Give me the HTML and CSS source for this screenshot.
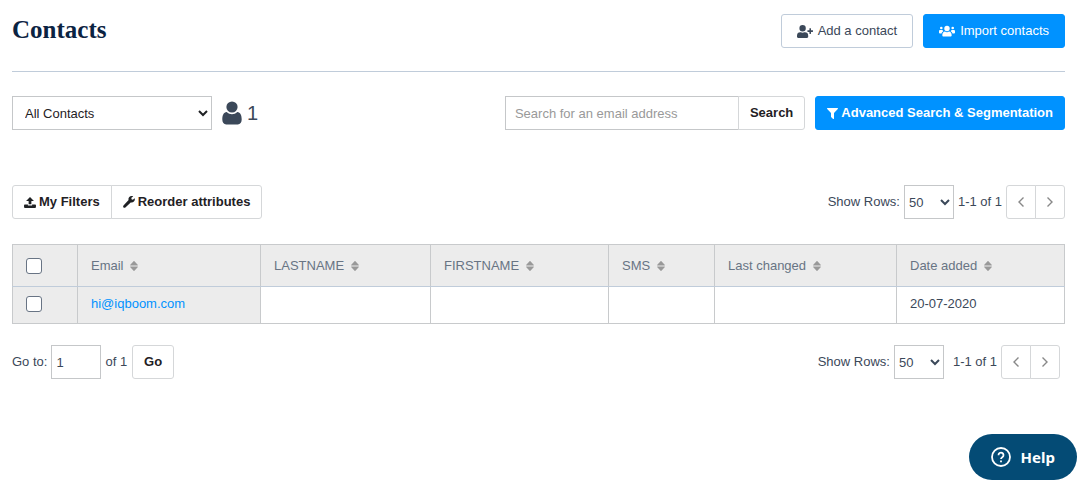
FILE: index.html
```html
<!DOCTYPE html>
<html lang="en">
<head>
<meta charset="utf-8">
<meta name="viewport" content="width=device-width, initial-scale=1">
<title>Contacts</title>
<link rel="stylesheet" href="styles.css">
</head>
<body>
<svg class="sprite" aria-hidden="true">
  <symbol id="sort" viewBox="0 0 8 12"><path d="M3.600 1.200 0.300 4.700C0 5.100.2 5.400.6 5.400h6.800c.4 0 .6-.3.300-.7L4.400 1.200c-.2-.3-.6-.3-.8 0zM3.600 10.800.3 7.300C0 6.900.2 6.600.6 6.600h6.800c.4 0 .6.3.300.7L4.400 10.800c-.2.300-.6.300-.8 0z"/></symbol>
  <symbol id="left" viewBox="0 0 8 12"><path d="M6.500 1.500 2 6l4.500 4.500"/></symbol>
  <symbol id="right" viewBox="0 0 8 12"><path d="M1.500 1.500 6 6l-4.500 4.500"/></symbol>
</svg>
<main class="page">
  <header class="header">
    <h1 class="title">Contacts</h1>
    <div class="header-actions">
      <button class="btn btn-outline" type="button">
        <svg class="icon-add" viewBox="0 0 640 512"><path d="M624 208h-64v-64c0-9-7-16-16-16h-32c-9 0-16 7-16 16v64h-64c-9 0-16 7-16 16v32c0 9 7 16 16 16h64v64c0 9 7 16 16 16h32c9 0 16-7 16-16v-64h64c9 0 16-7 16-16v-32c0-9-7-16-16-16zM224 256a128 128 0 1 0 0-256 128 128 0 0 0 0 256zm90 32h-17a174 174 0 0 1-146 0h-17A134 134 0 0 0 0 422v42c0 27 21 48 48 48h352c27 0 48-21 48-48v-42a134 134 0 0 0-134-134z"/></svg>
        Add a contact
      </button>
      <button class="btn btn-primary btn-import" type="button">
        <svg class="icon-users" viewBox="0 0 16 12"><circle cx="8" cy="3.500" r="2.700"/><path d="M4.600 11.500c-.8 0-1.300-.5-1.300-1.300 0-2.200 1-3.600 2.700-3.800 1.200 1 2.800 1 4 0 1.700.2 2.700 1.600 2.700 3.800 0 .8-.5 1.300-1.300 1.300z"/><circle cx="2.300" cy="3" r="1.300"/><circle cx="13.700" cy="3" r="1.300"/><path d="M1.200 5h2.300c.3.700.4 1 .8 1.400C3.300 6.800 2.700 7.600 2.500 8.500H1C.4 8.500 0 8.200 0 7.700V6.200C0 5.500.5 5 1.200 5zM14.800 5h-2.300c-.3.700-.4 1-.8 1.400 1 .4 1.600 1.200 1.800 2.100H15c.6 0 1-.3 1-.8V6.200c0-.7-.5-1.200-1.200-1.200z"/></svg>
        Import contacts
      </button>
    </div>
  </header>

  <section class="bar search-bar">
    <div class="list-picker">
      <select class="field select-list" aria-label="Contact list"><option>All Contacts</option></select>
      <svg class="icon-person" viewBox="0 0 20 24"><circle cx="10" cy="6" r="5.600"/><path d="M4.700 11c3.200 2.900 7.400 2.900 10.600 0 3 .2 4.400 3.300 4.400 7.600 0 2.900-1.500 4.800-3.900 4.800H4.200C1.800 23.400.3 21.500.3 18.600.3 14.300 1.700 11.200 4.700 11z"/></svg>
      <span class="count">1</span>
    </div>
    <form class="search-form">
      <div class="group">
        <input class="field search-input" type="text" placeholder="Search for an email address" aria-label="Search for an email address">
        <button class="btn btn-plain" type="button">Search</button>
      </div>
      <button class="btn btn-primary btn-advanced" type="button">
        <svg class="icon-filter" viewBox="0 0 11 11"><path d="M.6 0h9.800c.6 0 .8.600.4 1L7 5v5.500c0 .5-.5.700-.9.400L4.300 9.300C4.100 9.100 4 9 4 8.800V5L.2 1C-.2.600 0 0 .6 0z"/></svg>
        Advanced Search &amp; Segmentation
      </button>
    </form>
  </section>

  <section class="bar table-bar">
    <div class="group">
      <button class="btn btn-plain" type="button">
        <svg class="icon-upload" viewBox="0 0 13 12"><path d="M6.500 0 10.800 4.300H8V8H5V4.300H2.200zM.8 8.200h3.400v1.200h4.600V8.200h3.400c.5 0 .8.3.8.8v2c0 .6-.4 1-1 1H1c-.6 0-1-.4-1-1V9c0-.5.3-.8.8-.8z"/></svg>
        My Filters
      </button>
      <button class="btn btn-plain" type="button">
        <svg class="icon-wrench" viewBox="0 0 12 12"><path d="M11.700 2.300 9.800 3.700 8.500 3.200 8.400 1.800 10.200.5C8.900-.2 7.300 0 6.300 1 5.500 1.900 5.200 3 5.600 4.100L.5 9.500c-.5.600-.5 1.400 0 1.900.5.500 1.400.5 1.900 0l5.300-5c1.100.4 2.300.1 3.200-.8.900-.9 1.200-2.100.8-3.300z"/></svg>
        Reorder attributes
      </button>
    </div>
    <div class="pager">
      <label for="rows-top">Show Rows:</label>
      <select class="field select-rows" id="rows-top"><option>50</option></select>
      <span>1-1 of 1</span>
      <div class="group">
        <button class="btn btn-page" type="button" aria-label="Previous page"><svg class="chevron"><use href="#left"/></svg></button>
        <button class="btn btn-page" type="button" aria-label="Next page"><svg class="chevron"><use href="#right"/></svg></button>
      </div>
    </div>
  </section>

  <table class="contacts">
    <colgroup><col class="c-check"><col class="c-email"><col class="c-last"><col class="c-first"><col class="c-sms"><col class="c-changed"><col class="c-added"></colgroup>
    <thead>
      <tr>
        <th><input class="check" type="checkbox" aria-label="Select all contacts"></th>
        <th>Email <svg class="sort"><use href="#sort"/></svg></th>
        <th>LASTNAME <svg class="sort"><use href="#sort"/></svg></th>
        <th>FIRSTNAME <svg class="sort"><use href="#sort"/></svg></th>
        <th>SMS <svg class="sort"><use href="#sort"/></svg></th>
        <th>Last changed <svg class="sort"><use href="#sort"/></svg></th>
        <th>Date added <svg class="sort"><use href="#sort"/></svg></th>
      </tr>
    </thead>
    <tbody>
      <tr>
        <td class="shaded"><input class="check" type="checkbox" aria-label="Select hi@iqboom.com"></td>
        <td class="shaded"><a class="link" href="#">hi@iqboom.com</a></td>
        <td></td><td></td><td></td><td></td>
        <td>20-07-2020</td>
      </tr>
    </tbody>
  </table>

  <footer class="bar footer-bar">
    <form class="pager">
      <label for="goto">Go to:</label>
      <input class="field goto-input" id="goto" type="text" value="1">
      <span>of 1</span>
      <button class="btn btn-plain btn-go" type="button">Go</button>
    </form>
    <div class="pager pager-bottom">
      <label for="rows-bottom">Show Rows:</label>
      <select class="field select-rows" id="rows-bottom"><option>50</option></select>
      <span class="range">1-1 of 1</span>
      <div class="group">
        <button class="btn btn-page" type="button" aria-label="Previous page"><svg class="chevron"><use href="#left"/></svg></button>
        <button class="btn btn-page" type="button" aria-label="Next page"><svg class="chevron"><use href="#right"/></svg></button>
      </div>
    </div>
  </footer>
</main>
<button class="help" type="button">
  <svg class="icon-help" viewBox="0 0 20 20"><circle cx="10" cy="10" r="9"/><path d="M7.500 8.200a2.500 2.500 0 1 1 4 1.900c-.9.600-1.500.9-1.500 1.900M10 13.400v1.900"/></svg>
  Help
</button>
</body>
</html>
```
FILE: styles.css
```css
* {
  box-sizing: border-box;
}

body {
  margin: 0;
  background: #fff;
  color: #3b4859;
  font: 13px/20px "Liberation Sans", Arial, sans-serif;
}

.sprite {
  display: none;
}

.page {
  padding: 14px 20px 0 12px;
}

.header {
  display: flex;
  justify-content: space-between;
  padding-bottom: 23px;
  border-bottom: 1px solid #c0ccda;
}

.title {
  margin: 0;
  color: #0b2342;
  font: bold 25px/32px "Liberation Serif", "Times New Roman", serif;
}

.header-actions,
.search-form {
  display: flex;
  gap: 10px;
}

.bar {
  display: flex;
  justify-content: space-between;
  align-items: center;
}

.search-bar {
  margin-top: 24px;
}

.table-bar {
  margin-top: 55px;
}

.footer-bar {
  margin-top: 21px;
}

.btn {
  display: inline-flex;
  align-items: center;
  justify-content: center;
  gap: 3px;
  height: 34px;
  padding: 0 11px;
  border: 1px solid #d5d7d9;
  border-radius: 3px;
  background: #fff;
  color: #1f2124;
  font: bold 13px/20px "Liberation Sans", Arial, sans-serif;
  white-space: nowrap;
}

.btn-outline {
  padding: 0 15px;
  border-color: #c0ccda;
  color: #3b4859;
  font-weight: normal;
}

.btn-primary {
  border-color: #0092ff;
  background: #0092ff;
  color: #fff;
}

.btn-import {
  padding: 0 15px;
  font-weight: normal;
}

.btn-import,
.btn-outline {
  gap: 5px;
}

.group {
  display: flex;
}

.group > * + * {
  margin-left: -1px;
  border-top-left-radius: 0;
  border-bottom-left-radius: 0;
}

.group > :first-child {
  border-top-right-radius: 0;
  border-bottom-right-radius: 0;
}

.field {
  height: 34px;
  border: 1px solid #c5c7c9;
  border-radius: 0;
  background: #fff;
  color: #3b4859;
  font: 13px/20px "Liberation Sans", Arial, sans-serif;
}

.list-picker {
  display: flex;
  align-items: center;
}

.select-list {
  width: 200px;
  padding: 0 0 0 8px;
  color: #1f2124;
}

.count {
  margin-left: 5px;
  font-size: 20px;
}

.search-input {
  width: 234px;
  padding: 0 9px;
}

.search-input::placeholder {
  color: #999;
}

.pager {
  display: flex;
  align-items: center;
  gap: 4px;
}

.pager-bottom {
  padding-right: 5px;
}

.select-rows {
  width: 50px;
  padding: 0;
}

.range {
  margin-left: 5px;
}

.goto-input {
  width: 50px;
  padding: 0 4px;
}

.btn-go {
  margin-left: 1px;
}

.btn-page {
  width: 30px;
  padding: 0;
}

.contacts {
  width: 100%;
  margin-top: 25px;
  border-collapse: collapse;
  table-layout: fixed;
}

.c-check { width: 65px; }
.c-email { width: 183px; }
.c-last { width: 170px; }
.c-first { width: 178px; }
.c-sms { width: 106px; }
.c-changed { width: 182px; }
.c-added { width: 168px; }

.contacts th,
.contacts td {
  padding: 0 13px;
  border: 1px solid #c8cacc;
  text-align: left;
  font-weight: normal;
}

.contacts th {
  height: 42px;
  border-bottom-color: #c0ccda;
  background: #ececec;
  color: #687484;
}

.contacts td {
  height: 37px;
  padding-bottom: 3px;
}

.contacts .shaded {
  background: #ececec;
}

.check {
  display: block;
  width: 16px;
  height: 16px;
  margin: 0;
  appearance: none;
  border: 1px solid #687484;
  border-radius: 3px;
  background: #fff;
}

.check:checked {
  background: #0092ff;
}

.link {
  color: #0092ff;
  text-decoration: none;
}

.sort {
  width: 8px;
  height: 12px;
  margin-left: 3px;
  vertical-align: -2px;
  fill: #999;
}

.chevron {
  width: 8px;
  height: 12px;
  fill: none;
  stroke: #888;
  stroke-width: 1.4;
}

.icon-add,
.icon-users,
.icon-filter,
.icon-upload,
.icon-wrench,
.icon-person {
  flex: none;
  fill: currentColor;
}

.icon-add {
  width: 16px;
  height: 13px;
}

.icon-users {
  width: 16px;
  height: 12px;
}

.icon-filter {
  width: 11px;
  height: 11px;
}

.icon-upload {
  width: 12px;
  height: 11px;
}

.icon-wrench {
  width: 12px;
  height: 12px;
}

.icon-person {
  width: 20px;
  height: 24px;
  margin-left: 10px;
}

.help {
  position: fixed;
  right: 8px;
  bottom: 9px;
  display: flex;
  align-items: center;
  gap: 10px;
  height: 46px;
  padding: 0 22px;
  border: 0;
  border-radius: 23px;
  background: #044b75;
  color: #fff;
  font: bold 15px/20px "Noto Sans", "Open Sans", sans-serif;
}

.icon-help {
  width: 20px;
  height: 20px;
  fill: none;
  stroke: currentColor;
  stroke-width: 1.8;
}
```
